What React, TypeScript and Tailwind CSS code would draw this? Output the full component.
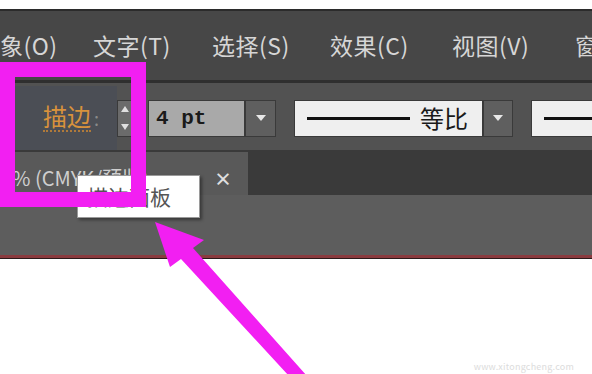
import React from "react";

const cjk = { fontFamily: '"Noto Sans CJK SC", "Noto Sans", sans-serif' };

function Caret() {
  return (
    <svg width="12" height="8" viewBox="0 0 12 8">
      <polygon points="1,1 11,1 6,7" fill="#e8e8e8" />
    </svg>
  );
}

export default function App() {
  const menu: [string, string][] = [
    ["象(O)", "w-[93px]"],
    ["文字(T)", "w-[119px]"],
    ["选择(S)", "w-[118px]"],
    ["效果(C)", "w-[122px]"],
    ["视图(V)", "w-[123px]"],
    ["窗", "w-[40px]"],
  ];
  return (
    <div className="relative w-[592px] h-[374px] overflow-hidden bg-white" style={cjk}>
      <div className="h-[9px] bg-white" />
      <div className="h-[71px] bg-[#474747] border-t-2 border-[#2b2b2b] flex items-center overflow-hidden">
        {menu.map(([t, w]) => (
          <div key={t} className={`${w} shrink-0 text-[23px] text-[#d6d6d6] whitespace-nowrap leading-none tracking-[0.5px]`}>
            {t}
          </div>
        ))}
      </div>
      <div className="h-[3px] bg-[#2f2f2f]" />
      <div className="h-[67px] bg-[#525252] flex items-center pt-[3px] overflow-hidden">
        <div className="w-[117px] shrink-0 self-stretch flex items-center bg-[#4b4e55] pl-[43px]">
          <span className="text-[24px] text-[#d8923c] leading-none border-b-2 border-dotted border-[#b07a3a] pb-[2px]">
            描边
          </span>
          <span className="text-[18px] text-[#8a8a8a] ml-[3px]">:</span>
        </div>
        <div className="shrink-0 w-[16px] h-[37px] bg-[#6b6b6b] border border-[#3a3a3a] flex flex-col items-center justify-around">
          <svg width="8" height="6" viewBox="0 0 8 6"><polygon points="0,6 8,6 4,0" fill="#e0e0e0" /></svg>
          <svg width="8" height="6" viewBox="0 0 8 6"><polygon points="0,0 8,0 4,6" fill="#e0e0e0" /></svg>
        </div>
        <div className="shrink-0 ml-[15px] w-[97px] h-[37px] bg-[#a9a9a9] border border-[#3a3a3a] flex items-center pl-[7px]">
          <span className="text-[21px] font-bold text-[#1a1a1a] leading-none" style={{ fontFamily: '"Liberation Mono", monospace' }}>
            4 pt
          </span>
        </div>
        <div className="shrink-0 w-[31px] h-[37px] bg-[#5f5f5f] border border-[#3a3a3a] flex items-center justify-center">
          <Caret />
        </div>
        <div className="shrink-0 ml-[18px] w-[189px] h-[37px] bg-[#efefef] border border-[#3a3a3a] flex items-center pl-[12px]">
          <div className="w-[103px] h-[3px] bg-[#111]" />
          <span className="ml-[10px] text-[24px] text-[#1a1a1a] leading-none">等比</span>
        </div>
        <div className="shrink-0 w-[30px] h-[37px] bg-[#5f5f5f] border border-[#3a3a3a] flex items-center justify-center">
          <Caret />
        </div>
        <div className="shrink-0 ml-[18px] w-[80px] h-[37px] bg-[#efefef] border border-[#3a3a3a] flex items-center pl-[12px]">
          <div className="w-[70px] h-[3px] bg-[#111]" />
        </div>
      </div>
      <div className="h-[45px] bg-[#3a3a3a] flex">
        <div className="w-[248px] mt-[2px] bg-[#595959] flex items-center pl-[12px] pt-[8px]">
          <span className="text-[20px] text-[#cfcfcf] whitespace-nowrap">% (CMYK/预览)</span>
          <span className="ml-auto mr-[16px] text-[18px] font-bold text-[#e0e0e0] leading-none">×</span>
        </div>
      </div>
      <div className="h-[60px] bg-[#5d5d5d]" />
      <div className="h-[3px] bg-[#8a3b3f]" />
      <div className="h-[1px] bg-[#2a1a1a]" />

      <div className="absolute left-[77px] top-[175px] w-[123px] h-[43px] bg-white border border-[#9a9a9a] shadow-[2px_2px_3px_rgba(0,0,0,0.4)] flex items-center pl-[9px]">
        <span className="text-[21px] text-[#555] leading-none">描边面板</span>
      </div>

      <div className="absolute right-[18px] bottom-[1px] text-[9px] text-[#dcdcdc] tracking-wide">
        www.xitongcheng.com
      </div>

      <svg className="absolute inset-0 pointer-events-none" width="592" height="374" viewBox="0 0 592 374">
        <rect x="7.5" y="69.5" width="131" height="130" fill="none" stroke="#f21ff2" strokeWidth="15" />
        <polygon
          points="155,222 204,240 193,248 307,376 289,376 181,259 170,267"
          fill="#f21ff2"
        />
      </svg>
    </div>
  );
}
